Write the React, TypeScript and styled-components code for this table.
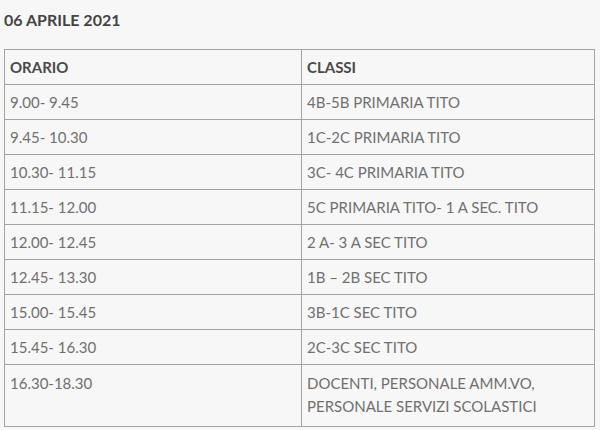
import React from "react";
import styled, { createGlobalStyle } from "styled-components";

const Global = createGlobalStyle`
  html, body { margin: 0; padding: 0; background: #f7f7f7; }
  body { font-family: "Lato", "Open Sans", sans-serif; }
`;

const Page = styled.div`
  width: 600px;
  height: 430px;
  box-sizing: border-box;
  padding: 10px 5px 0 4px;
  background: #f7f7f7;
`;

const Title = styled.h3`
  margin: 0 0 19px 0;
  font-size: 16px;
  line-height: 20px;
  font-weight: 700;
  color: #444;
`;

const Table = styled.table`
  width: 591px;
  border-collapse: collapse;
  border: 1px solid #a3a3a3;
`;

const HeadCell = styled.th`
  text-align: left;
  font-weight: 700;
  font-size: 15px;
  color: #4a4a4a;
  height: 35px;
  padding: 0 5px;
  border: 1px solid #a3a3a3;
  box-sizing: border-box;
`;

const Cell = styled.td<{ $wide?: boolean }>`
  font-size: 15px;
  color: #707070;
  height: 35px;
  padding: ${(p) => (p.$wide ? "7px 5px 8px" : "0 5px")};
  line-height: 23px;
  border: 1px solid #a3a3a3;
  vertical-align: ${(p) => (p.$wide ? "top" : "middle")};
  box-sizing: border-box;
`;

const rows: [string, string][] = [
  ["9.00- 9.45", "4B-5B PRIMARIA TITO"],
  ["9.45- 10.30", "1C-2C PRIMARIA TITO"],
  ["10.30- 11.15", "3C- 4C PRIMARIA TITO"],
  ["11.15- 12.00", "5C PRIMARIA TITO- 1 A SEC. TITO"],
  ["12.00- 12.45", "2 A- 3 A SEC TITO"],
  ["12.45- 13.30", "1B – 2B SEC TITO"],
  ["15.00- 15.45", "3B-1C SEC TITO"],
  ["15.45- 16.30", "2C-3C SEC TITO"],
];

export default function App() {
  return (
    <>
      <Global />
      <Page>
        <Title>06 APRILE 2021</Title>
        <Table>
          <colgroup>
            <col style={{ width: 297 }} />
            <col />
          </colgroup>
          <thead>
            <tr>
              <HeadCell>ORARIO</HeadCell>
              <HeadCell>CLASSI</HeadCell>
            </tr>
          </thead>
          <tbody>
            {rows.map(([a, b]) => (
              <tr key={a}>
                <Cell>{a}</Cell>
                <Cell>{b}</Cell>
              </tr>
            ))}
            <tr>
              <Cell $wide>16.30-18.30</Cell>
              <Cell $wide>
                DOCENTI, PERSONALE AMM.VO,
                <br />
                PERSONALE SERVIZI SCOLASTICI
              </Cell>
            </tr>
          </tbody>
        </Table>
      </Page>
    </>
  );
}
